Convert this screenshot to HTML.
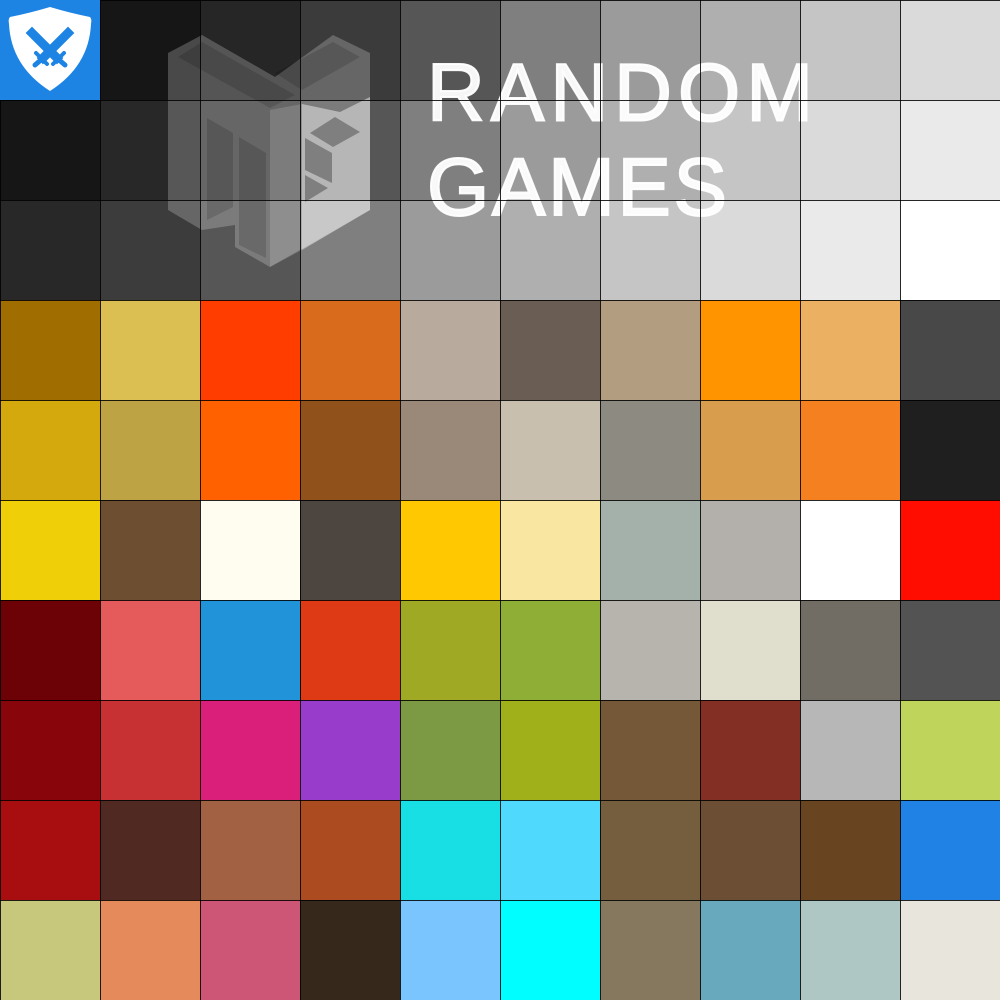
<!DOCTYPE html>
<html><head><meta charset="utf-8"><style>
html,body{margin:0;padding:0;width:1000px;height:1000px;overflow:hidden;background:#000}
#g{position:absolute;left:0;top:0;width:1000px;height:1000px;display:grid;grid-template-columns:repeat(10,100px);grid-template-rows:repeat(10,100px)}
svg{position:absolute;left:0;top:0}
</style></head><body>
<div id="g"></div>
<svg width="1000" height="1000" viewBox="0 0 1000 1000">
 <path d="M10,17 Q30,13 50,7 Q70,13 90,17 Q92,19 91,24 Q89,66 50,91 Q11,66 9,24 Q8,19 10,17 Z" fill="#fff"/>
 <g stroke="#1e84e4" fill="none">
  <path d="M32,33 L57,58" stroke-width="9" stroke-linecap="square"/>
  <path d="M68,33 L43,58" stroke-width="9" stroke-linecap="square"/>
  <path d="M53,64 L64,53" stroke-width="4" stroke-linecap="round"/>
  <path d="M47,64 L36,53" stroke-width="4" stroke-linecap="round"/>
  <path d="M58,59 L65,65" stroke-width="5" stroke-linecap="round"/>
  <path d="M42,59 L35,65" stroke-width="5" stroke-linecap="round"/>
 </g>
 <path d="M168,53 L202,35 L275,77 L333,35 L370,53 L370,210 L270,267 L235,247 L235,225 L202,230 L168,210 Z" fill="#fff" fill-opacity="0.22"/>
 <path d="M270,110 L302,104 L302,250 L270,267 Z" fill="#fff" fill-opacity="0.15"/>
 <path d="M302,104 L340,112 L370,97 L370,210 L302,250 Z" fill="#fff" fill-opacity="0.45"/>
 <g fill="#000" fill-opacity="0.14">
  <path d="M178,57 L202,42 L295,95 L270,108 Z"/>
  <path d="M275,73 L333,42 L360,57 L302,90 Z"/>
  <path d="M207,118 L233,133 L233,207 L207,220 Z"/>
  <path d="M239,137 L266,153 L266,258 L239,245 Z"/>
 </g>
 <g fill="#000" fill-opacity="0.3">
  <path d="M310,133 L335,117 L360,132 L333,147 Z"/>
  <path d="M305,138 L332,153 L332,183 L305,170 Z"/>
  <path d="M305,175 L328,188 L305,202 Z"/>
 </g>
 <g fill="#fff" fill-opacity="0.95" stroke="#fff" stroke-width="2" stroke-opacity="0.95" font-family="Liberation Sans, sans-serif" font-size="80" transform="scale(1,1.02)">
  <text x="427" y="118" textLength="386" lengthAdjust="spacing">RANDOM</text>
  <text x="427" y="211" textLength="300" lengthAdjust="spacing">GAMES</text>
 </g>
 <g id="lines" fill="#000" fill-opacity="0.85"></g>
</svg>
<script>
var c=[
["#1e84e4","#161616","#262626","#3b3b3b","#565656","#7f7f7f","#9b9b9b","#afafaf","#c5c5c5","#dadada"],
["#161616","#282828","#3c3c3c","#565656","#7f7f7f","#9b9b9b","#afafaf","#c5c5c5","#dadada","#eaeaea"],
["#282828","#3c3c3c","#565656","#7f7f7f","#9b9b9b","#afafaf","#c5c5c5","#dadada","#eaeaea","#ffffff"],
["#a06d00","#dbbf52","#ff3d00","#d86c1c","#b8ab9e","#6a5d53","#b39d80","#ff9400","#ebb062","#484848"],
["#d4a90d","#bda343","#ff6000","#91511a","#9a8878","#c9bfae","#8d8b81","#d99e4d","#f4801f","#1f1f1f"],
["#efcf07","#6d4e30","#fffdf0","#4d4640","#ffc800","#f9e6a0","#a4b1aa","#b3afab","#ffffff","#ff0d00"],
["#6c0206","#e55b5b","#2193d8","#de3a16","#9fa924","#8fae36","#b7b4ad","#e0dfcd","#716d64","#535353"],
["#88060b","#c73133","#da1f7a","#973ccb","#7c9944","#a0b01a","#755838","#842f23","#b7b7b7","#bfd45b"],
["#a80e10","#502922","#a26143","#ab4b1f","#17dfe4","#4fd9fd","#745e3e","#6b4e33","#684421","#1f82e4"],
["#c8c87c","#e58a5b","#cd5575","#37281c","#7ac5fd","#00fdff","#86775f","#69a9be","#aec6c4","#e7e5dc"]];
var g=document.getElementById('g'),h='';
for(var r=0;r<10;r++)for(var k=0;k<10;k++)h+='<div style="background:'+c[r][k]+'"></div>';
g.innerHTML=h;
var L='';
for(var i=0;i<10;i++){
 var p=i*100;
 if(i==0){L+='<rect x="0" y="100" width="1" height="900"/><rect x="100" y="0" width="900" height="1"/>';}
 else{L+='<rect x="'+p+'" y="0" width="1" height="1000"/><rect x="0" y="'+p+'" width="1000" height="1"/>';}
}
document.getElementById('lines').innerHTML=L;
</script>
</body></html>
